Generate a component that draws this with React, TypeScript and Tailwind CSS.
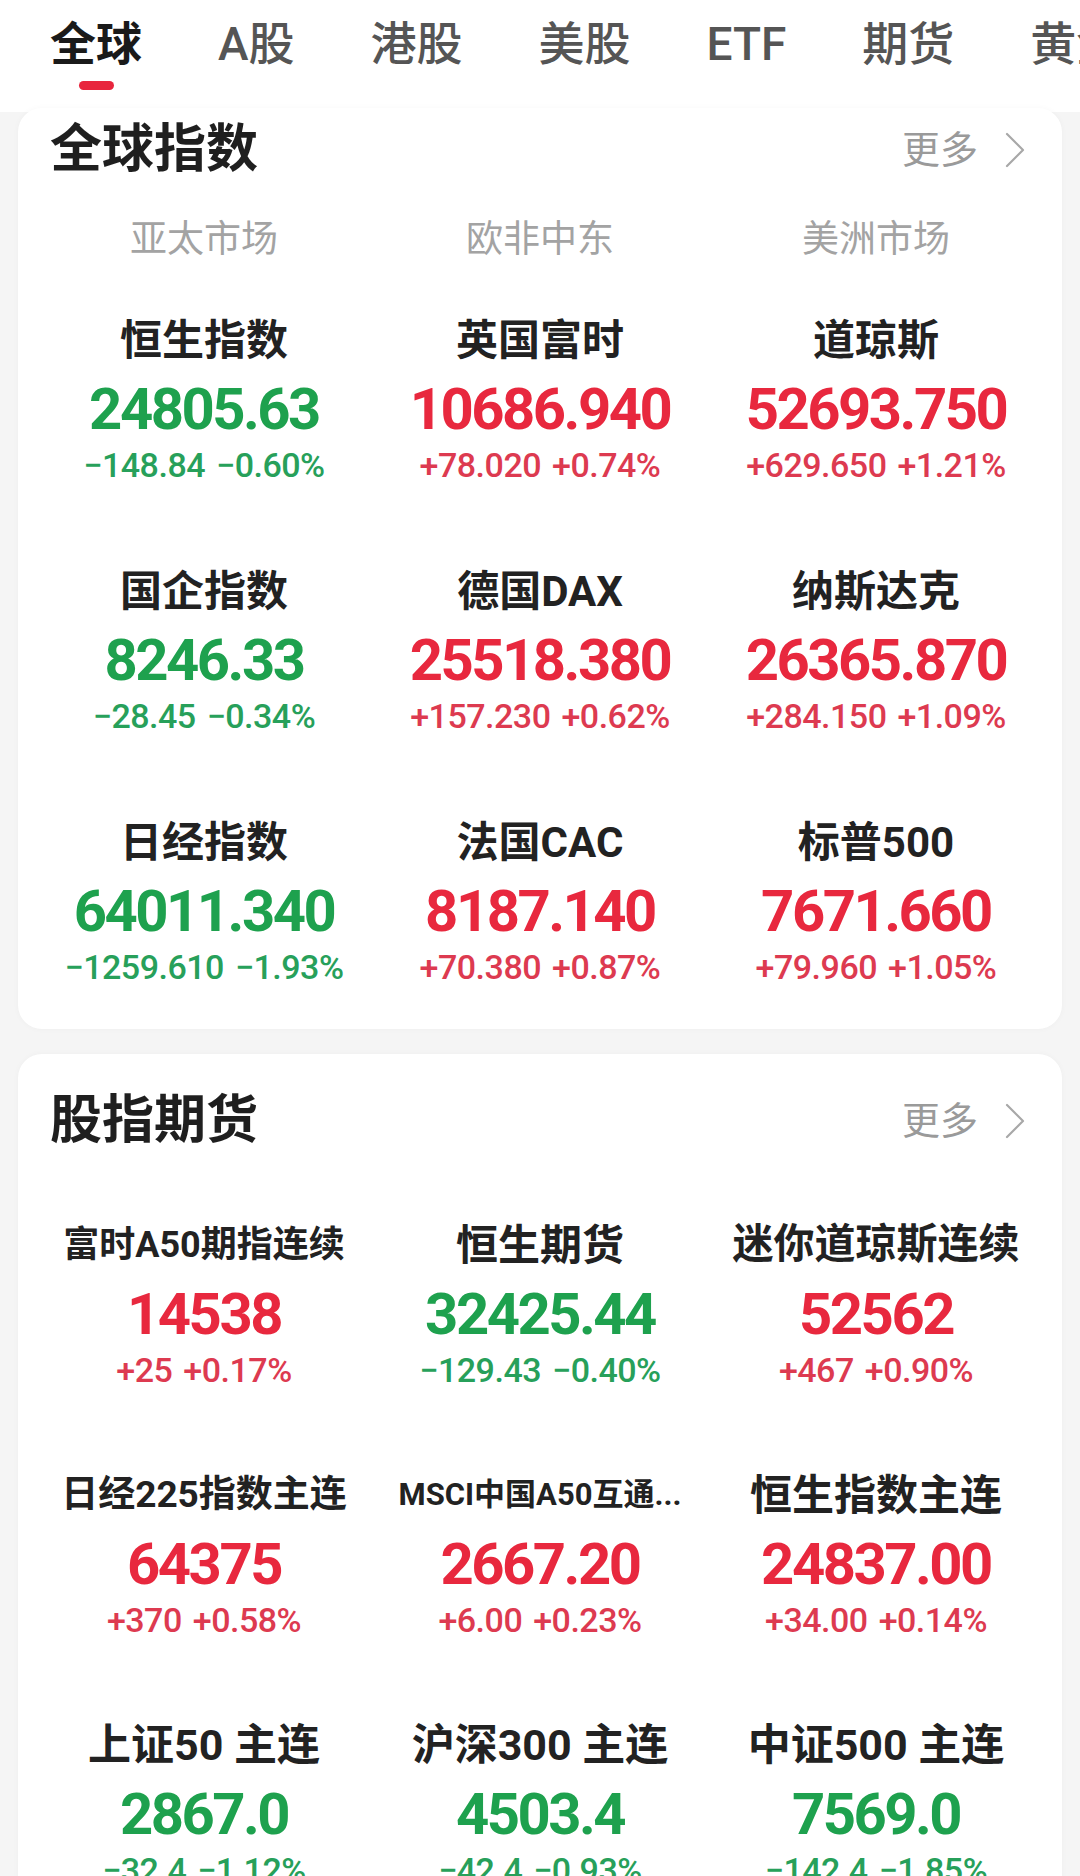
import React from 'react';

type Quote = {
    name: string;
    value: string;
    change: string;
    pct: string;
    up: boolean;
    nameSize?: string;
};

const tabs = ['全球', 'A股', '港股', '美股', 'ETF', '期货', '黄金'];

const globalIndexes: Quote[] = [
    { name: '恒生指数', value: '24805.63', change: '−148.84', pct: '−0.60%', up: false },
    { name: '英国富时', value: '10686.940', change: '+78.020', pct: '+0.74%', up: true },
    { name: '道琼斯', value: '52693.750', change: '+629.650', pct: '+1.21%', up: true },
    { name: '国企指数', value: '8246.33', change: '−28.45', pct: '−0.34%', up: false },
    { name: '德国DAX', value: '25518.380', change: '+157.230', pct: '+0.62%', up: true },
    { name: '纳斯达克', value: '26365.870', change: '+284.150', pct: '+1.09%', up: true },
    { name: '日经指数', value: '64011.340', change: '−1259.610', pct: '−1.93%', up: false },
    { name: '法国CAC', value: '8187.140', change: '+70.380', pct: '+0.87%', up: true },
    { name: '标普500', value: '7671.660', change: '+79.960', pct: '+1.05%', up: true },
];

const futures: Quote[] = [
    { name: '富时A50期指连续', value: '14538', change: '+25', pct: '+0.17%', up: true, nameSize: 'text-[36px]' },
    { name: '恒生期货', value: '32425.44', change: '−129.43', pct: '−0.40%', up: false },
    { name: '迷你道琼斯连续', value: '52562', change: '+467', pct: '+0.90%', up: true, nameSize: 'text-[41px]' },
    { name: '日经225指数主连', value: '64375', change: '+370', pct: '+0.58%', up: true, nameSize: 'text-[37px]' },
    { name: 'MSCI中国A50互通...', value: '2667.20', change: '+6.00', pct: '+0.23%', up: true, nameSize: 'text-[31px]' },
    { name: '恒生指数主连', value: '24837.00', change: '+34.00', pct: '+0.14%', up: true },
    { name: '上证50 主连', value: '2867.0', change: '−32.4', pct: '−1.12%', up: false, nameSize: 'text-[43px]' },
    { name: '沪深300 主连', value: '4503.4', change: '−42.4', pct: '−0.93%', up: false, nameSize: 'text-[43px]' },
    { name: '中证500 主连', value: '7569.0', change: '−142.4', pct: '−1.85%', up: false, nameSize: 'text-[43px]' },
];

const cjk = "font-['Roboto','Noto_Sans_CJK_SC',sans-serif]";

function MoreLink() {
    return (
        <div className="flex items-center gap-[26px] text-[38px] text-[#9a9a9a]">
            <span className="leading-none">更多</span>
            <svg width="22" height="36" viewBox="0 0 22 36" fill="none">
                <path d="M3 2 L19 18 L3 34" stroke="#a8a8a8" strokeWidth="2.2" strokeLinecap="round" strokeLinejoin="round" />
            </svg>
        </div>
    );
}

function QuoteCell({ q }: { q: Quote }) {
    const valueColor = q.up ? 'text-[#e8283e]' : 'text-[#1ea14e]';
    const changeColor = q.up ? 'text-[#dd3a50]' : 'text-[#27a05a]';
    return (
        <div className="flex flex-col items-center">
            <div className={`h-[48px] flex items-center whitespace-nowrap font-bold text-[#222] ${q.nameSize ?? 'text-[42px]'}`}>
                {q.name}
            </div>
            <div className={`mt-[10px] h-[70px] flex items-center font-['Roboto',sans-serif] font-bold text-[58px] tracking-[-2.5px] ${valueColor}`}>
                {q.value}
            </div>
            <div className={`h-[42px] flex items-center font-['Roboto',sans-serif] font-medium text-[34px] tracking-[-0.5px] ${changeColor}`}>
                <span>{q.change}</span>
                <span className="ml-[11px]">{q.pct}</span>
            </div>
        </div>
    );
}

export default function App() {
    return (
        <div className={`w-[1080px] h-[1876px] overflow-hidden bg-[#f5f5f5] ${cjk}`}>
            {/* Tabs */}
            <div className="bg-white h-[112px] pt-[16px] pl-[50px] overflow-hidden">
                <div className="flex gap-[76px] whitespace-nowrap">
                    {tabs.map((t, i) => (
                        <div key={t} className="flex flex-col items-center shrink-0">
                            <div className={`h-[56px] flex items-center text-[46px] leading-none ${i === 0 ? 'font-bold text-[#1a1a1a]' : 'font-medium text-[#555]'}`}>
                                {t}
                            </div>
                            {i === 0 ? (
                                <div className="mt-[9px] w-[35px] h-[9px] rounded-full bg-[#e8253d]" />
                            ) : null}
                        </div>
                    ))}
                </div>
            </div>

            {/* 全球指数 */}
            <div className="-mt-[4px] mx-[18px] bg-white rounded-[24px] shadow-[0_0_6px_rgba(0,0,0,0.03)]">
                <div className="h-[84px] flex items-center justify-between pl-[32px] pr-[36px]">
                    <div className="text-[52px] font-bold text-[#1f1f1f] leading-none">全球指数</div>
                    <MoreLink />
                </div>
                <div className="grid grid-cols-3 px-[18px] h-[96px] items-center">
                    {['亚太市场', '欧非中东', '美洲市场'].map(s => (
                        <div key={s} className="text-center text-[37px] text-[#a3a3a3]">{s}</div>
                    ))}
                </div>
                <div className="grid grid-cols-3 px-[18px] pt-[28px] pb-[41px] gap-y-[81px]">
                    {globalIndexes.map(q => (
                        <QuoteCell key={q.name} q={q} />
                    ))}
                </div>
            </div>

            {/* 股指期货 */}
            <div className="mt-[25px] mx-[18px] bg-white rounded-[24px] shadow-[0_0_6px_rgba(0,0,0,0.03)]">
                <div className="h-[134px] flex items-center justify-between pl-[32px] pr-[36px]">
                    <div className="text-[52px] font-bold text-[#1f1f1f] leading-none">股指期货</div>
                    <MoreLink />
                </div>
                <div className="grid grid-cols-3 px-[18px] pt-[33px] pb-[41px] gap-y-[80px]">
                    {futures.map(q => (
                        <QuoteCell key={q.name} q={q} />
                    ))}
                </div>
            </div>
        </div>
    );
}
